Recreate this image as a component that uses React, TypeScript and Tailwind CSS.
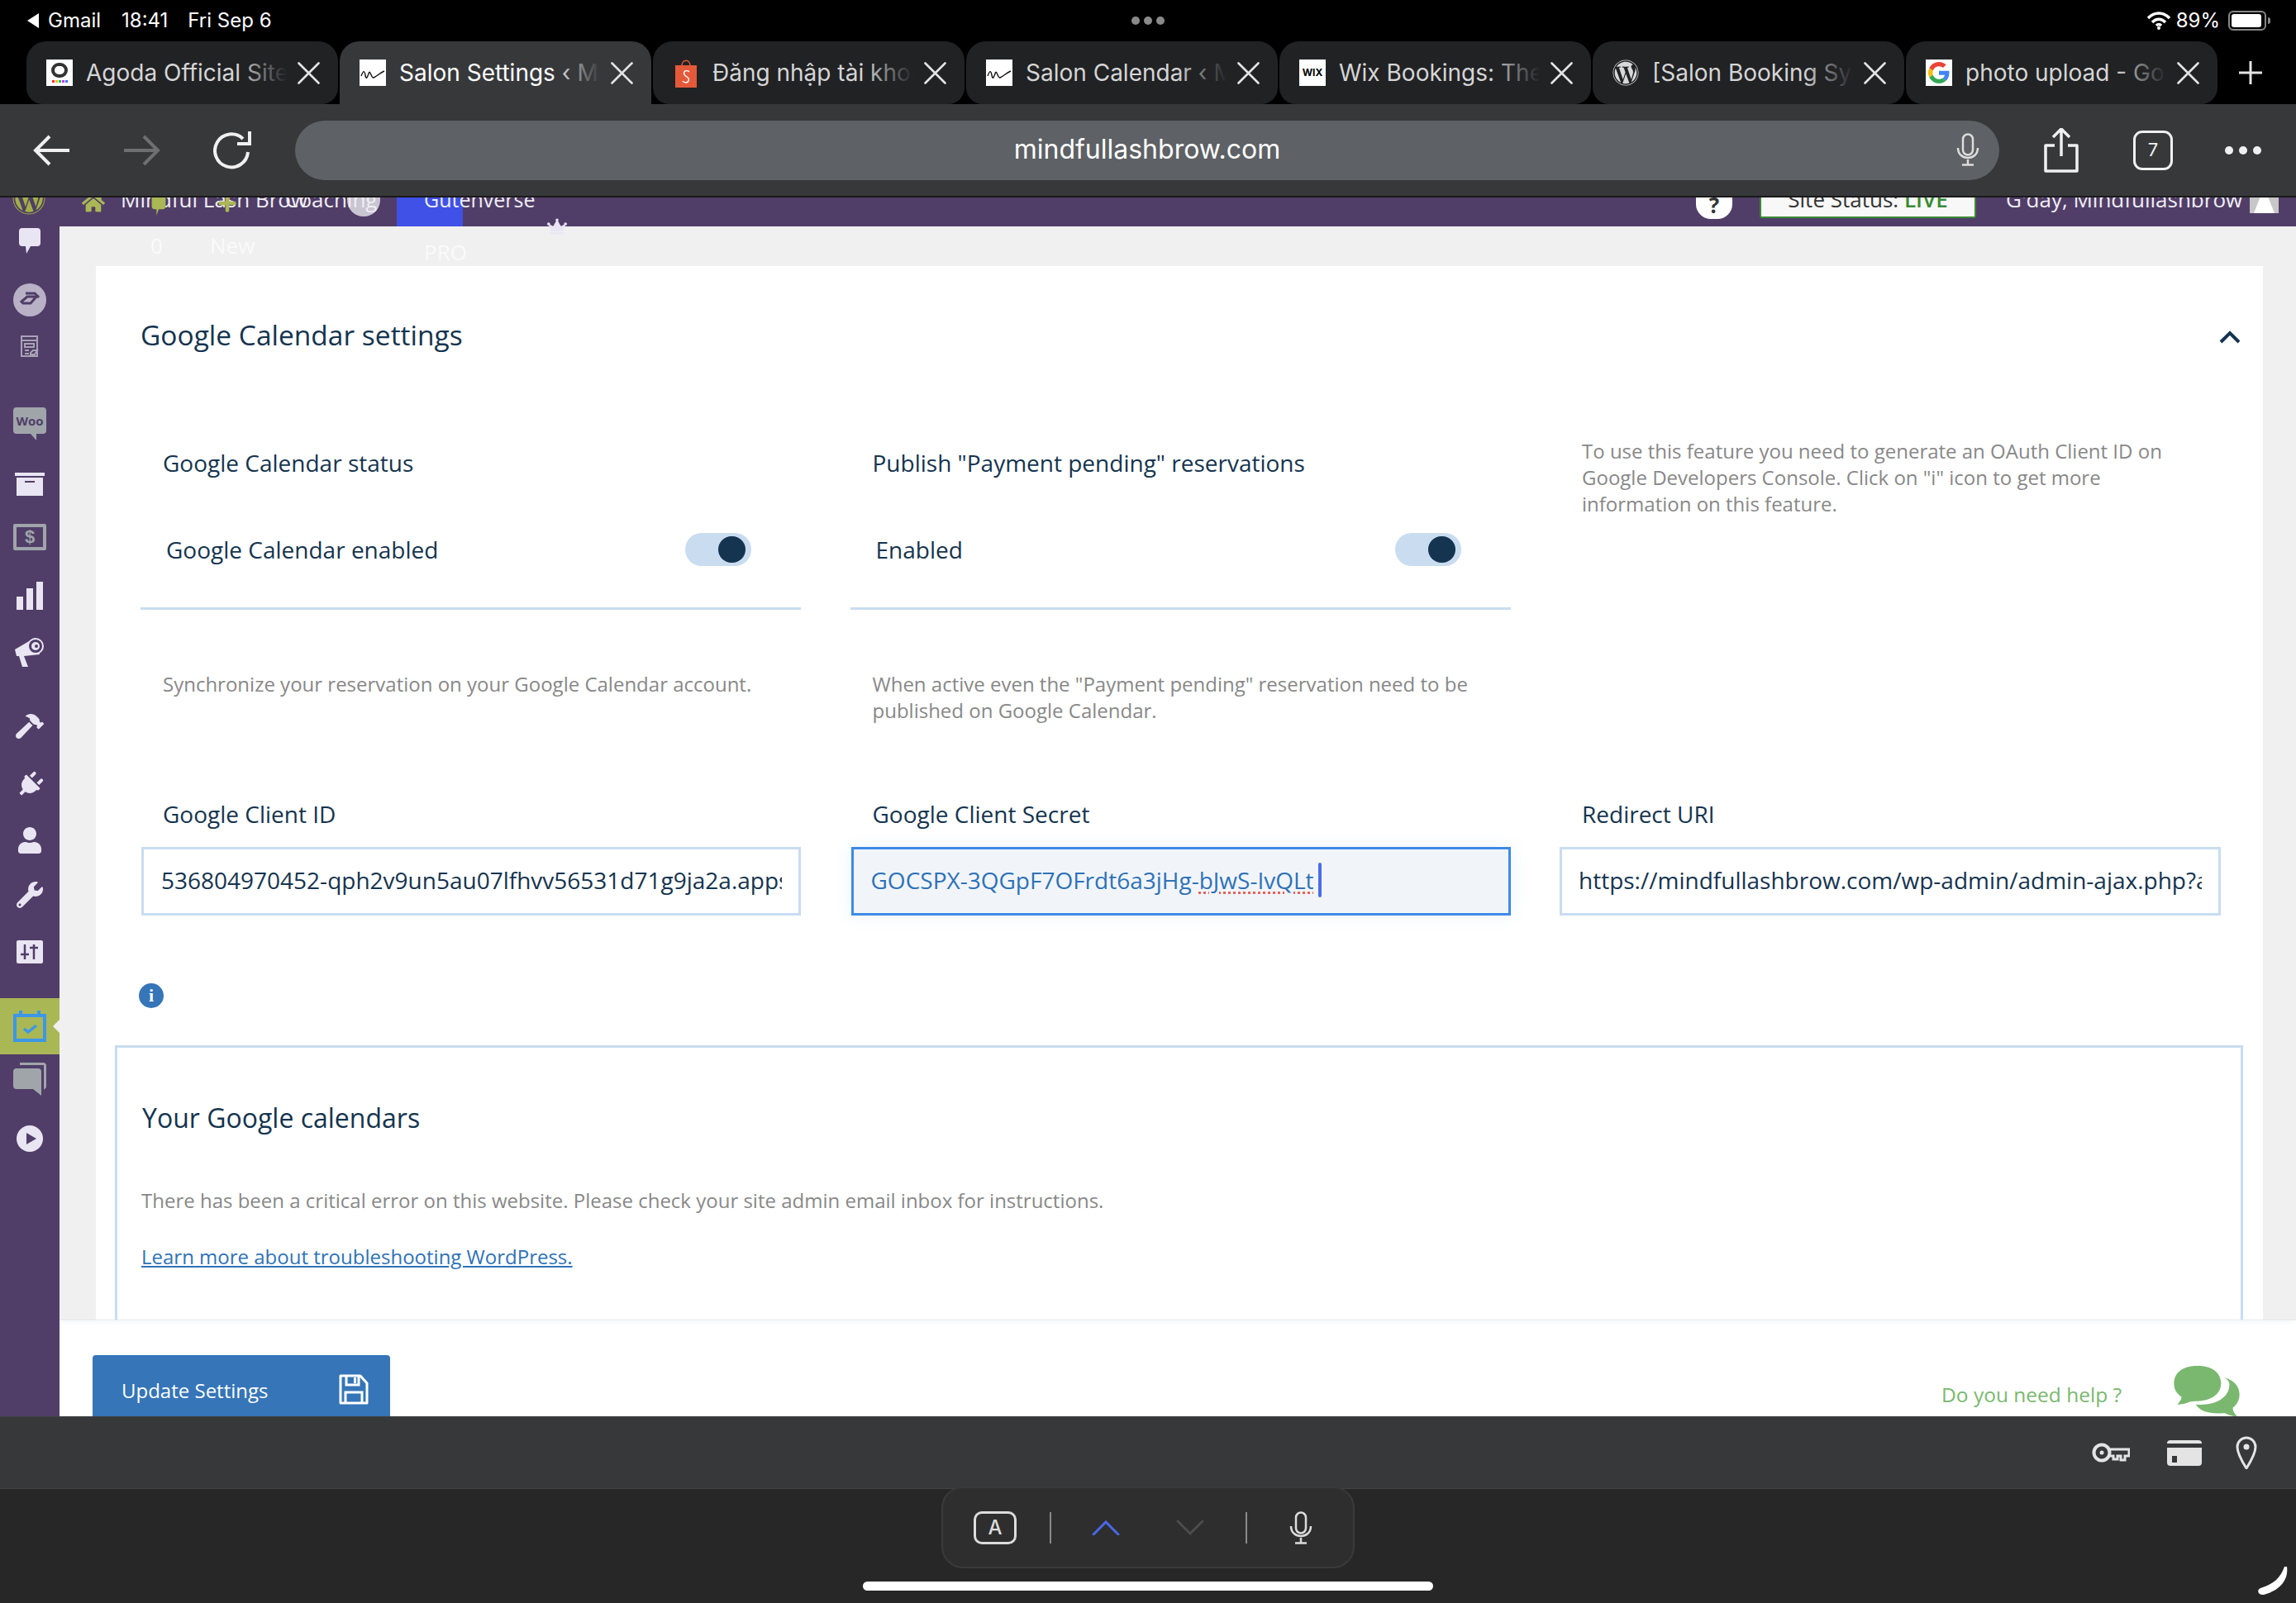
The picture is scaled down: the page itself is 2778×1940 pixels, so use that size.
import type { ReactNode } from "react";
import { FaHammer, FaPlug, FaUser, FaWordpress, FaWrench, FaHome, FaPlus, FaCrown } from "react-icons/fa";

const sans = "font-['Inter','Roboto',sans-serif]";
const open = "font-['Open_Sans',sans-serif]";

const GoogleG = () => (
  <svg viewBox="0 0 48 48" className="w-[26px] h-[26px]">
    <path fill="#EA4335" d="M24 9.500c3.500 0 6.700 1.300 9.200 3.400l6.900-6.900C35.900 2.400 30.300 0 24 0 14.600 0 6.500 5.400 2.600 13.200l8 6.200C12.500 13.600 17.800 9.500 24 9.500z" />
    <path fill="#4285F4" d="M47 24.500c0-1.600-.1-3.100-.4-4.500H24v9h12.900c-.6 3-2.300 5.500-4.800 7.200l7.700 6C44.300 37.900 47 31.800 47 24.500z" />
    <path fill="#FBBC05" d="M10.600 28.600c-.5-1.400-.8-3-.8-4.600s.3-3.200.8-4.600l-8-6.200C.9 16.500 0 20.100 0 24s.9 7.500 2.600 10.800l8-6.200z" />
    <path fill="#34A853" d="M24 48c6.500 0 11.900-2.100 15.800-5.800l-7.700-6c-2.100 1.400-4.900 2.300-8.100 2.300-6.200 0-11.500-4.100-13.400-9.900l-8 6.200C6.500 42.600 14.600 48 24 48z" />
  </svg>
);

const tabs: { title: string; active?: boolean; icon: ReactNode }[] = [
  {
    title: "Agoda Official Site",
    icon: (
      <div className="w-8 h-8 bg-white flex flex-col items-center justify-center">
        <div className="w-[20px] h-[18px] rounded-full border-[4px] border-[#333]" />
        <div className="flex gap-px mt-[3px]">
          <span className="w-[3px] h-[3px] bg-red-500" />
          <span className="w-[3px] h-[3px] bg-amber-400" />
          <span className="w-[3px] h-[3px] bg-green-500" />
          <span className="w-[3px] h-[3px] bg-fuchsia-500" />
          <span className="w-[3px] h-[3px] bg-blue-500" />
        </div>
      </div>
    ),
  },
  { title: "Salon Settings ‹ Mindful", active: true, icon: <Squiggle /> },
  {
    title: "Đăng nhập tài khoản",
    icon: (
      <svg viewBox="0 0 32 36" className="w-8 h-9">
        <path d="M11 10c0-9 10-9 10 0" fill="none" stroke="#e4593a" strokeWidth="1.500" />
        <path d="M3 9h26v27H3z" fill="#e4593a" />
        <path d="M20 17c-3-3-8-1-6 3s7 3 5 8c-2 3-6 2-7 0" fill="none" stroke="#fff" strokeWidth="1.500" />
      </svg>
    ),
  },
  { title: "Salon Calendar ‹ Mindful", icon: <Squiggle /> },
  {
    title: "Wix Bookings: The",
    icon: <div className={`w-8 h-8 bg-white text-black text-[12px] font-bold flex items-center justify-center ${sans}`}>WIX</div>,
  },
  { title: "[Salon Booking System", icon: <FaWordpress className="w-8 h-8 text-[#d8d8d8]" /> },
  {
    title: "photo upload - Google",
    icon: (
      <div className="w-8 h-8 bg-white flex items-center justify-center">
        <GoogleG />
      </div>
    ),
  },
];

function Squiggle() {
  return (
    <div className="w-8 h-8 bg-white flex items-center justify-center">
      <svg viewBox="0 0 32 32" className="w-8 h-8">
        <path d="M2 20c3-8 4-6 5-1s2 4 4-2 3 6 6 5 8-6 13-8" fill="none" stroke="#111" strokeWidth="1.400" />
      </svg>
    </div>
  );
}

const CloseX = () => (
  <svg viewBox="0 0 27 27" className="w-[27px] h-[27px] shrink-0">
    <path d="M1.500 1.500l24 24M25.500 1.500l-24 24" stroke="#e4e4e4" strokeWidth="2.600" strokeLinecap="round" />
  </svg>
);

const Tab = ({ title, active, icon }: { title: string; active?: boolean; icon: ReactNode }) => (
  <div
    className={`w-[377px] h-[76px] shrink-0 rounded-t-[24px] rounded-b-[20px] flex items-center pl-6 pr-[22px] ${
      active ? "bg-[#37383a] text-white rounded-b-none" : "bg-[#212224] text-[#d5d5d6]"
    }`}
  >
    <div className="w-8 flex items-center justify-center shrink-0">{icon}</div>
    <div className="relative ml-4 mr-[13px] flex-1 overflow-hidden whitespace-nowrap text-[28px] leading-[36px]">
      {title}
      <div
        className={`absolute right-0 top-0 bottom-0 w-[60px] bg-gradient-to-r from-transparent ${
          active ? "to-[#37383a]" : "to-[#212224]"
        }`}
      />
    </div>
    <CloseX />
  </div>
);

const Toggle = () => (
  <div className="w-20 h-10 rounded-full bg-[#c9dcf0] flex items-center justify-end pr-[7px]">
    <div className="w-[33px] h-8 rounded-full bg-[#15344f]" />
  </div>
);

const StatusCol = ({ label, text }: { label: string; text: string }) => (
  <div>
    <div className="pl-[27px] h-10 leading-[40px] text-[28px]">{label}</div>
    <div className="mt-[65px] h-10 pl-[31px] pr-[60px] flex items-center justify-between text-[28px]">
      <span>{text}</span>
      <Toggle />
    </div>
    <div className="mt-[50px] h-[3px] bg-[#c9dcf0]" />
  </div>
);

const sideIcon = "text-[#e9e5f3]";

const Sidebar = () => (
  <div className="w-[72px] shrink-0 bg-[#503e68] flex flex-col items-center overflow-hidden">
    <svg viewBox="0 0 26 32" className={`w-[26px] h-8 mt-[2px] ${sideIcon}`}>
      <path fill="currentColor" d="M4 0h18a4 4 0 014 4v14a4 4 0 01-4 4h-8l-5 9-1-9H4a4 4 0 01-4-4V4a4 4 0 014-4z" />
    </svg>
    <svg viewBox="0 0 40 40" className="w-10 h-10 mt-[35px]">
      <circle cx="20" cy="20" r="20" fill="#b9b1c6" />
      <path d="M10 22l7-6h11l-7 8h-9z" fill="none" stroke="#503e68" strokeWidth="3" />
      <path d="M15 12h11l5 5" fill="none" stroke="#503e68" strokeWidth="3" />
    </svg>
    <svg viewBox="0 0 22 26" className="w-[22px] h-[26px] mt-[23px] text-[#a9a2b6]">
      <path fill="none" stroke="currentColor" strokeWidth="2" d="M1 1h19v24H1zM1 6h19M5 10h11v4H5zM5 18h5M5 22h5" />
      <path fill="#503e68" stroke="currentColor" strokeWidth="2" d="M12 21l3-3h5l-3 5h-5z" />
    </svg>
    <svg viewBox="0 0 40 40" className="w-10 h-10 mt-[61px]">
      <path fill="#a0a5aa" d="M4 0h32a4 4 0 014 4v24a4 4 0 01-4 4H28v8l-7-8H4a4 4 0 01-4-4V4a4 4 0 014-4z" />
      <text x="20" y="22" textAnchor="middle" fontSize="15" fontWeight="700" fill="#503e68" fontFamily="Open Sans">Woo</text>
    </svg>
    <svg viewBox="0 0 36 28" className={`w-9 h-7 mt-[39px] ${sideIcon}`}>
      <path fill="currentColor" d="M0 0h36v4H0zM2 6h32v22H2z" />
      <path fill="#503e68" d="M12 10h12v2H12z" />
    </svg>
    <div className="w-10 h-8 mt-[34px] rounded-[2px] border-[4px] border-[#a0a5aa] flex items-center justify-center text-[#a0a5aa] font-bold text-[22px] leading-none font-['Liberation_Sans',sans-serif]">$</div>
    <div className="mt-[38px] h-[34px] flex items-end gap-1">
      <div className="w-2 h-4 bg-[#e9e5f3]" />
      <div className="w-2 h-[26px] bg-[#e9e5f3]" />
      <div className="w-2 h-[34px] bg-[#e9e5f3]" />
    </div>
    <svg viewBox="0 0 36 38" className={`w-9 h-[38px] mt-[31px] ${sideIcon}`}>
      <path fill="currentColor" d="M0 17L24 3l6 20-19 2 5 13H9L5 25H2z" />
      <circle cx="25" cy="13" r="10" fill="#e9e5f3" />
      <circle cx="25" cy="13" r="8" fill="#503e68" />
      <circle cx="25" cy="13" r="5" fill="#e9e5f3" />
      <circle cx="26" cy="13" r="2" fill="#503e68" />
    </svg>
    <FaHammer className={`w-[34px] h-[34px] mt-[55px] ${sideIcon}`} />
    <FaPlug className={`w-8 h-8 mt-[38px] rotate-45 ${sideIcon}`} />
    <FaUser className={`w-8 h-8 mt-[35px] ${sideIcon}`} />
    <FaWrench className={`w-8 h-8 mt-[34px] ${sideIcon}`} />
    <div className="w-8 h-7 mt-[39px] rounded-[2px] bg-[#e9e5f3] flex items-center justify-center gap-1">
      <svg viewBox="0 0 24 20" className="w-6 h-5">
        <path d="M6 1v18M1 13h10M17 1v18M12 5h10" stroke="#503e68" strokeWidth="2.500" />
      </svg>
    </div>
    <div className="relative w-[72px] h-[68px] mt-[42px] bg-[#a9b755] flex items-center justify-center">
      <svg viewBox="0 0 40 40" className="w-10 h-10">
        <path d="M2 7h36v30H2z" fill="none" stroke="#3d97e8" strokeWidth="4" />
        <path d="M9 1v8M31 1v8" stroke="#3d97e8" strokeWidth="4" />
        <path d="M13 23l5 4 10-8" fill="none" stroke="#3d97e8" strokeWidth="3.500" />
      </svg>
      <div className="absolute right-0 top-[26px] w-0 h-0 border-y-[8px] border-y-transparent border-r-[8px] border-r-[#f0f0f0]" />
    </div>
    <svg viewBox="0 0 40 40" className="w-10 h-10 mt-[10px]">
      <path fill="#a0a5aa" d="M8 0h28a4 4 0 014 4v26l-3 3V3H8z" />
      <path fill="#a0a5aa" d="M4 7h26a4 4 0 014 4v29l-10-8H4a4 4 0 01-4-4V11a4 4 0 014-4z" />
    </svg>
    <div className="w-8 h-8 mt-[36px] rounded-full bg-[#e9e5f3] flex items-center justify-center">
      <div className="ml-1 w-0 h-0 border-y-[7px] border-y-transparent border-l-[12px] border-l-[#503e68]" />
    </div>
  </div>
);

const AdminBar = () => (
  <div className={`relative h-[35px] shrink-0 bg-[#503e68] z-10 text-[26px] leading-[26px] text-[#f0eef4] ${open}`}>
    <FaWordpress className="absolute left-[15px] -top-[19px] w-10 h-10 text-[#a3b045]" />
    <FaHome className="absolute left-[99px] -top-[6px] w-[28px] h-[25px] text-[#a9b755]" />
    <div className="absolute left-[420px] -top-[5px] w-[40px] h-[28px] rounded-b-full bg-[#c9c5d2]" />
    <span className="absolute left-[146px] -top-[11px] whitespace-nowrap">Mindful Lash Brow</span>
    <svg viewBox="0 0 26 34" className="absolute left-[179px] top-0 w-[26px] h-[22px] text-[#a9b755]">
      <path fill="currentColor" d="M0 0h26v16a6 6 0 01-6 6h-7l-4 12v-12H6a6 6 0 01-6-6z" />
    </svg>
    <FaPlus className="absolute left-[263px] -top-[5px] w-[24px] h-[24px] text-[#a9b755]" />
    <span className="absolute left-[345px] -top-[11px] whitespace-nowrap">Coaching</span>
    <div className="absolute left-[480px] top-0 w-[80px] h-[35px] bg-[#3f51e6]" />
    <span className="absolute left-[513px] -top-[11px] text-[25px] whitespace-nowrap">Gutenverse</span>
    <FaCrown className="absolute left-[662px] top-[24px] w-[24px] h-[22px] text-[#e9e5f3]" />
    <span className="absolute left-[182px] top-[45px] text-[#fafafa]">0</span>
    <span className="absolute left-[254px] top-[45px] text-[#fafafa]">New</span>
    <span className="absolute left-[513px] top-[53px] text-[#fafafa]">PRO</span>
    <div className="absolute left-[2052px] -top-[8px] w-[44px] h-[34px] rounded-b-[18px] bg-white text-[#333] font-bold flex items-center justify-center">?</div>
    <div className="absolute left-[2129px] top-0 w-[262px] h-[26px] bg-[#f8f8f8] border-x-2 border-b-2 border-[#3a8a34] rounded-b-[3px] overflow-hidden text-center text-[#333] text-[26px] leading-[26px] -mt-px">
      <div className="-mt-[10px]">
        Site Status: <span className="text-[#3a8a34] font-semibold">LIVE</span>
      </div>
    </div>
    <span className="absolute left-[2427px] -top-[11px] whitespace-nowrap">G'day, Mindfullashbrow</span>
    <div className="absolute left-[2722px] top-0 w-[35px] h-[19px] bg-[#c7c7c7] flex justify-center">
      <div className="w-[25px] h-[19px] bg-white [clip-path:polygon(30%_0,70%_0,100%_100%,0_100%)]" />
    </div>
  </div>
);

const Content = () => (
  <div className="flex-1 min-h-0 overflow-hidden bg-[#f0f0f0] pl-[44px] pr-[40px] pt-[48px]">
    <div className={`bg-white h-[1400px] text-[#15344f] ${open}`}>
      <div className="relative pt-[58px] pl-[54px] text-[33.5px] leading-[50px]">
        Google Calendar settings
        <svg viewBox="0 0 26 16" className="absolute left-[2569px] top-[78px] w-[26px] h-4">
          <path d="M2 14L13 3l11 11" fill="none" stroke="#15344f" strokeWidth="4" />
        </svg>
      </div>

      <div className="mt-[110px] ml-[54px] grid grid-cols-[799px_799px_800px] gap-x-[59.5px]">
        <StatusCol label="Google Calendar status" text="Google Calendar enabled" />
        <StatusCol label={'Publish "Payment pending" reservations'} text="Enabled" />
        <p className="-mt-[10px] pl-[27px] pr-[50px] text-[24px] leading-[32px] text-[#888]">
          To use this feature you need to generate an OAuth Client ID on Google Developers Console. Click on "i" icon to get more information on this feature.
        </p>

        <p className="mt-[74px] pl-[27px] text-[24px] leading-[32px] text-[#888]">
          Synchronize your reservation on your Google Calendar account.
        </p>
        <p className="mt-[74px] pl-[27px] pr-[30px] text-[24px] leading-[32px] text-[#888]">
          When active even the "Payment pending" reservation need to be published on Google Calendar.
        </p>
        <div />

        <div className="mt-[89px] pl-[27px] h-10 leading-[40px] text-[28px]">Google Client ID</div>
        <div className="mt-[89px] pl-[27px] h-10 leading-[40px] text-[28px]">Google Client Secret</div>
        <div className="mt-[89px] pl-[27px] h-10 leading-[40px] text-[28px]">Redirect URI</div>

        <input
          readOnly
          value="536804970452-qph2v9un5au07lfhvv56531d71g9ja2a.apps.googleusercontent.com"
          className="mt-5 ml-px h-[83px] border-[3px] border-[#c9dcf0] pl-[21px] pr-[20px] pb-[3px] text-[28px] outline-none bg-white"
        />
        <div className="mt-5 ml-px h-[83px] border-[3px] border-[#3d8ae6] bg-[#f1f5fa] pl-[21px] pr-[20px] pb-[3px] flex items-center text-[28px] text-[#2f72b7] shadow-[0_0_20px_rgba(61,138,230,0.1)]">
          <span>GOCSPX-3QGpF7OFrdt6a3jHg-</span>
          <span className="underline decoration-dotted decoration-[#e8625a] decoration-[3px] underline-offset-[3px]">bJwS-IvQLt</span>
          <span className="ml-[5px] w-1 h-[42px] rounded bg-[#4a6ee8]" />
        </div>
        <input
          readOnly
          value="https://mindfullashbrow.com/wp-admin/admin-ajax.php?action=google"
          className="mt-5 h-[83px] border-[3px] border-[#c9dcf0] px-[20px] pb-[3px] text-[28px] outline-none bg-white"
        />
      </div>

      <div className="mt-[82px] ml-[52px] w-[30px] h-[30px] rounded-full bg-[#3575b8] flex items-center justify-center text-white text-[22px] font-bold leading-none font-['Liberation_Serif',serif]">
        i
      </div>

      <div className="mt-[45px] ml-[23px] mr-[24px] border-[3px] border-[#c9dcf0] h-[600px] pl-[30px]">
        <div className="pt-[60px] text-[32px] leading-[50px]">Your Google calendars</div>
        <p className="mt-[59px] -ml-[1px] text-[24px] leading-[32px] text-[#888]">
          There has been a critical error on this website. Please check your site admin email inbox for instructions.
        </p>
        <a className="block mt-[36px] -ml-[1px] text-[24px] leading-[32px] text-[#2f72b7] underline">
          Learn more about troubleshooting WordPress.
        </a>
      </div>
    </div>
  </div>
);

const Footer = () => (
  <div className={`relative h-[117px] shrink-0 bg-white overflow-hidden border-t border-[#e2e6ea] ${open}`}>
    <div className="absolute left-0 right-0 -top-px h-[2px] shadow-[0_-2px_6px_rgba(21,52,79,0.25)]" />
    <div className="mt-[42px] ml-[40px] w-[360px] h-[100px] rounded-[4px] bg-[#3575b8] text-white pl-[35px] pr-[26px] pt-[25px] flex items-start justify-between">
      <span className="text-[24px] leading-[36px]">Update Settings</span>
      <svg viewBox="0 0 36 37" className="w-9 h-[37px] -mt-[2px]">
        <path d="M2 2h24l8 9v24H2z" fill="none" stroke="#fff" strokeWidth="3" strokeLinejoin="round" />
        <path d="M9 2v11h15V2M8 35V22h20v13" fill="none" stroke="#fff" strokeWidth="3" />
        <path d="M18 4h3v7h-3z" fill="#fff" />
      </svg>
    </div>
    <span className="absolute left-[2277px] top-[72px] text-[24.5px] leading-[36px] text-[#7ab86f] whitespace-nowrap">Do you need help ?</span>
    <svg viewBox="0 0 78 64" className="absolute left-[2558px] top-[55px] w-[80px] h-[65px]">
      <path fill="#7ab86f" d="M28 0c16 0 28 7 28 21S42 42 28 42c-4 0-7 0-10 1-4 2-9 3-14 3 3-3 5-6 5-9C3 33 0 28 0 21 0 7 12 0 28 0z" />
      <path fill="#7ab86f" d="M60 14c11 3 18 10 18 20 0 7-3 12-8 16 0 4 2 7 5 10-6 0-11-2-15-4-14 2-29-1-34-10 20 2 40-6 40-24 0-3-2-6-6-8z" />
    </svg>
  </div>
);

const Bottom = () => (
  <div className="relative h-[138px] shrink-0 bg-[#272727]">
    <div className="absolute left-[1139px] -top-[3px] w-[500px] h-[99px] rounded-[26px] bg-[#2e2e2e] border-2 border-[#3a3a3b] flex items-center">
      <div className={`ml-[37px] w-[52px] h-10 rounded-[10px] border-[3px] border-[#dcdcdc] flex items-center justify-center text-[#dcdcdc] text-[24px] font-medium ${sans}`}>A</div>
      <div className="ml-[40px] w-[2px] h-[38px] bg-[#8a8a8a]" />
      <svg viewBox="0 0 34 18" className="ml-[49px] w-[34px] h-[18px]">
        <path d="M2 17L17 2l15 15" fill="none" stroke="#4a68e8" strokeWidth="3" strokeLinecap="round" />
      </svg>
      <svg viewBox="0 0 34 18" className="ml-[68px] w-[34px] h-[18px]">
        <path d="M2 1l15 15L32 1" fill="none" stroke="#4c4c4c" strokeWidth="3" strokeLinecap="round" />
      </svg>
      <div className="ml-[50px] w-[2px] h-[38px] bg-[#8a8a8a]" />
      <svg viewBox="0 0 30 40" className="ml-[50px] w-[30px] h-10">
        <rect x="9" y="1.500" width="12" height="25" rx="6" fill="none" stroke="#dcdcdc" strokeWidth="2.500" />
        <path d="M3 18c0 16 24 16 24 0M15 32v6M8 38.500h14" fill="none" stroke="#dcdcdc" strokeWidth="2.500" />
      </svg>
    </div>
    <div className="absolute left-[1044px] top-[112px] w-[690px] h-[11px] rounded-full bg-white" />
    <svg viewBox="0 0 40 36" className="absolute left-[2730px] top-[93px] w-10 h-9">
      <path d="M37 1c2 14-6 28-28 34-7 1-9-6-4-8 16-5 24-12 29-26z" fill="#fff" />
    </svg>
  </div>
);

export default function App() {
  return (
    <div className={`w-[2778px] h-[1940px] overflow-hidden bg-black flex flex-col ${sans}`}>
      {/* ios status bar */}
      <div className="h-[50px] shrink-0 relative flex items-center pl-[33px] pr-[31px] text-white text-[24px]">
        <span className="w-0 h-0 border-y-[9px] border-y-transparent border-r-[14px] border-r-white" />
        <span className="ml-[11px]">Gmail</span>
        <span className="ml-[25px]">18:41</span>
        <span className="ml-[24px]">Fri Sep 6</span>
        <div className="absolute left-[1369px] top-[20px] flex gap-[5px]">
          <span className="w-[10px] h-[10px] rounded-full bg-[#8a8a8a]" />
          <span className="w-[10px] h-[10px] rounded-full bg-[#8a8a8a]" />
          <span className="w-[10px] h-[10px] rounded-full bg-[#8a8a8a]" />
        </div>
        <div className="ml-auto flex items-center">
          <svg viewBox="0 0 28 22" className="w-7 h-[22px]">
            <path d="M1 8c8-8 18-8 26 0M6 13c5-5 11-5 16 0M11 17c2-2 4-2 6 0" fill="none" stroke="#fff" strokeWidth="3.500" />
            <circle cx="14" cy="20" r="2" fill="#fff" />
          </svg>
          <span className="ml-[7px]">89%</span>
          <div className="ml-[10px] w-[46px] h-[24px] rounded-[6px] border-2 border-[#888] p-[2px]">
            <div className="w-[36px] h-full rounded-[3px] bg-white" />
          </div>
          <span className="ml-[2px] w-[3px] h-[8px] rounded-r bg-[#888]" />
        </div>
      </div>

      {/* tab strip */}
      <div className="h-[76px] shrink-0 flex items-center gap-[2px] pl-[32px]">
        {tabs.map((t) => (
          <Tab key={t.title} title={t.title} active={t.active} icon={t.icon} />
        ))}
        <svg viewBox="0 0 30 30" className="ml-[23px] w-[30px] h-[30px]">
          <path d="M15 1v28M1 15h28" stroke="#e4e4e4" strokeWidth="3" />
        </svg>
      </div>

      {/* toolbar */}
      <div className="h-[113px] shrink-0 bg-[#37383a] border-b-2 border-[#1a1a1a] flex items-center pl-[40px]">
        <svg viewBox="0 0 46 38" className="w-[46px] h-[38px]">
          <path d="M44 19H3M20 2L3 19l17 17" fill="none" stroke="#f0f0f0" strokeWidth="4" />
        </svg>
        <svg viewBox="0 0 46 38" className="ml-[62px] w-[46px] h-[38px]">
          <path d="M2 19h41M26 2l17 17-17 17" fill="none" stroke="#6e6f71" strokeWidth="4" />
        </svg>
        <svg viewBox="0 0 46 48" className="ml-[64px] w-[46px] h-12">
          <path d="M36 10A20 20 0 1 0 42 26" fill="none" stroke="#f0f0f0" strokeWidth="4" />
          <path d="M44 1v15H29" fill="none" stroke="#f0f0f0" strokeWidth="4" />
        </svg>
        <div className="relative ml-[53px] w-[2062px] h-[72px] rounded-[36px] bg-[#5e6165] flex items-center justify-center pb-[2px] text-white text-[32px]">
          mindfullashbrow.com
          <svg viewBox="0 0 30 40" className="absolute left-[2009px] top-[15px] w-[30px] h-10">
            <rect x="9" y="1.500" width="12" height="25" rx="6" fill="none" stroke="#dcdcdc" strokeWidth="2.500" />
            <path d="M3 18c0 16 24 16 24 0M15 32v6M8 38.500h14" fill="none" stroke="#dcdcdc" strokeWidth="2.500" />
          </svg>
        </div>
        <svg viewBox="0 0 44 54" className="ml-[53px] w-[44px] h-[54px]">
          <path d="M22 34V2M12 11l10-10 10 10M14 21H3v31h38V21H30" fill="none" stroke="#f0f0f0" strokeWidth="3.500" strokeLinejoin="round" />
        </svg>
        <div className="ml-[65px] w-[48px] h-[48px] rounded-[11px] border-[3px] border-[#f0f0f0] flex items-center justify-center text-[#f0f0f0] text-[22px]">7</div>
        <div className="ml-[63px] flex gap-[7px]">
          <span className="w-[10px] h-[10px] rounded-full bg-[#f0f0f0]" />
          <span className="w-[10px] h-[10px] rounded-full bg-[#f0f0f0]" />
          <span className="w-[10px] h-[10px] rounded-full bg-[#f0f0f0]" />
        </div>
      </div>

      {/* page */}
      <div className="flex-1 min-h-0 flex flex-col overflow-hidden">
        <AdminBar />
        <div className="flex-1 min-h-0 flex">
          <Sidebar />
          <div className="flex-1 min-w-0 flex flex-col">
            <Content />
            <Footer />
          </div>
        </div>
      </div>

      {/* keyboard accessory */}
      <div className="h-[88px] shrink-0 bg-[#37383a] border-y border-[#414244] flex items-center justify-end">
        <svg viewBox="0 0 46 26" className="w-[46px] h-[26px] text-[#e4e4e4]">
          <circle cx="12" cy="13" r="9.500" fill="none" stroke="currentColor" strokeWidth="4" />
          <circle cx="12" cy="13" r="2.500" fill="currentColor" />
          <path d="M21 9h24v8h-5v5h-5v-5h-4v4h-5v-4h-5" fill="none" stroke="currentColor" strokeWidth="3" />
        </svg>
        <div className="ml-[45px] w-[42px] h-[31px] rounded-[4px] bg-[#e4e4e4] border-t-[4px] border-[#e4e4e4] flex flex-col">
          <div className="h-[5px] bg-[#37383a]" />
          <div className="mt-[10px] ml-[6px] w-[6px] h-[8px] bg-[#37383a]" />
        </div>
        <svg viewBox="0 0 26 40" className="ml-[41px] mr-[47px] w-[26px] h-10">
          <path d="M13 39C6 28 2 20 2 13a11 11 0 0122 0c0 7-4 15-11 26z" fill="none" stroke="#e4e4e4" strokeWidth="3" />
          <circle cx="13" cy="13" r="3.500" fill="#e4e4e4" />
        </svg>
      </div>

      <Bottom />
    </div>
  );
}
